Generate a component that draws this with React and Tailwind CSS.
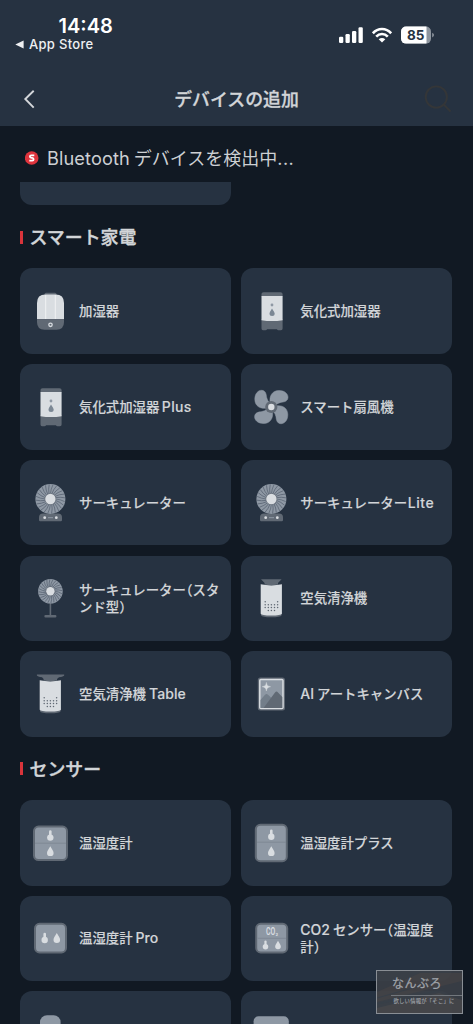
import React from "react";

const LIGHT = "#d9dde1";
const MID = "#8e98a4";
const DARK = "#606974";

function Icon({ children }) {
  return (
    <svg width="40" height="40" viewBox="0 0 40 40" fill="none" className="block shrink-0">
      {children}
    </svg>
  );
}

function Humidifier() {
  return (
    <Icon>
      <rect x="14.5" y="1.8" width="12" height="4" rx="1.5" fill={DARK} />
      <path d="M7 28.3V12Q7 3.6 15.5 3.6H25.5Q34 3.6 34 12V28.3Z" fill={LIGHT} />
      <path d="M15.7 4V28M25.3 4V28" stroke="#f0f2f3" strokeWidth="1" />
      <path d="M7 28.3H34V31Q34 38.7 26.5 38.7H14.5Q7 38.7 7 31Z" fill={DARK} />
      <circle cx="20.5" cy="33.8" r="1.7" stroke={LIGHT} strokeWidth="1.3" />
    </Icon>
  );
}

function Evaporative() {
  return (
    <Icon>
      <path d="M10.5 5.5V3Q10.5 1.2 12.5 1.2H29.5Q31.6 1.2 31.6 3V5.5Z" fill={DARK} />
      <path d="M10.5 28V37.5Q10.5 39.2 12 39.2H14.5Q15.8 39.2 16 38.3H26Q26.2 39.2 27.5 39.2H30Q31.6 39.2 31.6 37.5V28Z" fill={DARK} />
      <path d="M10.5 4.9H31.6V29.2Q21 31 10.5 29.2Z" fill={LIGHT} />
      <circle cx="21" cy="14" r="1.4" fill={MID} />
      <path d="M21 17.4C19.5 20 18.5 21.2 18.5 22.6A2.6 2.5 0 0 0 23.7 22.6C23.7 21.2 22.5 20 21 17.4Z" fill="#7b8794" />
    </Icon>
  );
}

function BladeFan() {
  return (
    <Icon>
      <g transform="translate(20.3 20)">
        {[0, 90, 180, 270].map((a) => (
          <path
            key={a}
            transform={`rotate(${a})`}
            d="M-1.1 -4C-2.4 -11 1 -16.4 7.5 -16.5C13.5 -16.6 16.9 -13 16.7 -9.5C16.4 -5.2 12 -5 9.5 -4.6Q6.5 -4 4.4 -2Z"
            fill={MID}
            stroke={MID}
            strokeWidth="0.5"
          />
        ))}
        <circle r="6.1" fill={DARK} />
        <circle r="3.2" fill={LIGHT} />
      </g>
    </Icon>
  );
}

function Rotor({ cx, cy, r, hub }) {
  const gaps = Array.from({ length: 24 }, (_, i) => i * 15);
  return (
    <g transform={`translate(${cx} ${cy})`}>
      <circle r={r} fill={MID} />
      {gaps.map((a) => (
        <path
          key={a}
          transform={`rotate(${a})`}
          d={`M0 ${-hub}Q0.4 ${-(hub + r) / 2} 2.6 ${-r + 0.7}`}
          stroke="#566170"
          strokeWidth="0.7"
        />
      ))}
      <circle r={hub + 0.5} fill={DARK} />
      <circle r={hub} fill={LIGHT} />
    </g>
  );
}

function Circulator() {
  return (
    <Icon>
      <path d="M9 37V34.5Q9 30.5 13 30.5H28Q32 30.5 32 34.5V37Q32 38.2 30.8 38.2H10.2Q9 38.2 9 37Z" fill={DARK} />
      <Rotor cx={20.4} cy={16} r={15} hub={5.2} />
      <circle cx="14.7" cy="34.7" r="1.4" fill={LIGHT} />
      <circle cx="26.3" cy="34.7" r="1.4" fill={LIGHT} />
      <path d="M18 34.7H23" stroke={MID} strokeWidth="1" />
    </Icon>
  );
}

function StandCirculator() {
  return (
    <Icon>
      <path d="M20.4 24V38" stroke={DARK} strokeWidth="1.6" />
      <rect x="14.4" y="37" width="12" height="2.6" rx="1" fill={DARK} />
      <Rotor cx={20.4} cy={13.2} r={12.3} hub={4.2} />
    </Icon>
  );
}

function PurifierBody() {
  const dots = [];
  const cols = [13.6, 16.7, 19.8, 22.9, 26];
  cols.forEach((x, c) => {
    [23.8, 26.7, 29.6, 32.5].forEach((y, r) => {
      const edge = c === 0 || c === 4;
      if (edge && r === 3) return;
      if (!edge && r === 0) return;
      dots.push(<circle key={`${x}-${y}`} cx={x + 0.6} cy={y} r="0.75" fill={DARK} />);
    });
  });
  return (
    <>
      <path d="M10 34H30.6V37.2Q29.5 39.2 20.3 39.2Q11 39.2 10 37.2Z" fill={DARK} />
      <path d="M9.7 6.3Q20.3 8.5 30.9 6.3V35.8Q30.2 37.6 20.3 37.6Q10.4 37.6 9.7 35.8Z" fill={LIGHT} />
      {dots}
    </>
  );
}

function Purifier() {
  return (
    <Icon>
      <path d="M10 1.3H30.6L27 5V6.6Q20.3 7.8 13.6 6.6V5Z" fill={DARK} />
      <PurifierBody />
    </Icon>
  );
}

function PurifierTable() {
  return (
    <Icon>
      <path d="M6.9 0.6H34.2V1.6Q33.5 2.8 29 3.3L27 5V6.6Q20.3 7.8 13.6 6.6V5L12 3.3Q7.5 2.8 6.9 1.6Z" fill={DARK} />
      <PurifierBody />
    </Icon>
  );
}

function ArtCanvas() {
  return (
    <Icon>
      <rect x="6.8" y="3.6" width="27.2" height="33" rx="2.5" fill={DARK} />
      <rect x="8.8" y="5.6" width="23.2" height="29" rx="1" fill={MID} stroke={LIGHT} strokeWidth="1.5" />
      <path d="M9.5 26L14 20.8Q15.5 19.4 17 20.8L20.5 24L13 33.9H9.5Z" fill="#737e8a" />
      <path d="M12.5 33.9L24 18.4Q25.5 16.6 27 18.4L31.3 23V33.9Z" fill={DARK} />
      <path d="M15.4 8.4C15.9 11.4 16.6 12 19.6 12.7C16.6 13.4 15.9 14 15.4 17C14.9 14 14.2 13.4 11.2 12.7C14.2 12 14.9 11.4 15.4 8.4Z" fill={LIGHT} stroke={LIGHT} strokeWidth="0.4" />
    </Icon>
  );
}

function Thermo({ x, y }) {
  return (
    <g transform={`translate(${x} ${y})`} fill={LIGHT}>
      <rect x="-1.3" y="-5.3" width="2.6" height="7" rx="1.3" />
      <circle cx="0" cy="2" r="3.2" />
    </g>
  );
}

function Drop({ x, y }) {
  return (
    <path
      transform={`translate(${x} ${y})`}
      d="M0 -5C-1.6 -2.2 -3.3 -0.2 -3.3 1.7A3.3 3.2 0 0 0 3.3 1.7C3.3 -0.2 1.6 -2.2 0 -5Z"
      fill={LIGHT}
    />
  );
}

function Panel({ x, y, w, h }) {
  return <rect x={x + 1} y={y + 1} width={w - 2} height={h - 2} rx="4.5" fill={MID} stroke={DARK} strokeWidth="2" />;
}

function Meter() {
  return (
    <Icon>
      <Panel x={3} y={2.6} w={35} h={35.4} />
      <path d="M5 20.2H36" stroke="#7b8591" strokeWidth="0.8" />
      <Thermo x={20.3} y={12.6} />
      <Drop x={20.3} y={28.2} />
    </Icon>
  );
}

function MeterPlus() {
  return (
    <Icon>
      <Panel x={3.8} y={0.8} w={33} h={38.4} />
      <path d="M6 19.2H35" stroke="#7b8591" strokeWidth="0.8" />
      <Thermo x={20.3} y={11.8} />
      <Drop x={20.3} y={28.2} />
    </Icon>
  );
}

function MeterPro() {
  return (
    <Icon>
      <Panel x={4} y={4.8} w={33} h={30.6} />
      <Thermo x={14.7} y={20} />
      <Drop x={26.8} y={20} />
    </Icon>
  );
}

function MeterCO2() {
  return (
    <Icon>
      <Panel x={4.2} y={4.8} w={33} h={30.6} />
      <path d="M6.5 20.3H35" stroke="#7b8591" strokeWidth="0.8" />
      <text transform="translate(15 17.4) scale(0.66 1)" fontSize="10.4" fontWeight="600" fontFamily="Roboto, sans-serif" fill={LIGHT}>
        CO
      </text>
      <text x="24.6" y="17.6" fontSize="4.4" fontWeight="700" fontFamily="Roboto, sans-serif" fill={LIGHT}>
        2
      </text>
      <g transform="translate(14.5 27) scale(0.86)">
        <Thermo x={0} y={0} />
      </g>
      <g transform="translate(27 27) scale(0.86)">
        <Drop x={0} y={0} />
      </g>
    </Icon>
  );
}

function RoundSensor() {
  return (
    <Icon>
      <rect x="10" y="1.2" width="20.6" height="38" rx="7" fill={MID} />
    </Icon>
  );
}

function WideSensor() {
  return (
    <Icon>
      <rect x="2.6" y="2.3" width="35.2" height="36" rx="5" fill={MID} />
    </Icon>
  );
}

function Latin({ children, className = "" }) {
  return <span className={`font-['Inter'] ${className}`}>{children}</span>;
}

function Half({ children }) {
  return <span className="[font-feature-settings:'halt']">{children}</span>;
}

const appliances = [
  { icon: Humidifier, label: "加湿器" },
  { icon: Evaporative, label: "気化式加湿器" },
  { icon: Evaporative, label: <>気化式加湿器<Latin className="ml-[2.5px] text-[14px] tracking-[0.3px]">Plus</Latin></> },
  { icon: BladeFan, label: "スマート扇風機" },
  { icon: Circulator, label: "サーキュレーター" },
  { icon: Circulator, label: <>サーキュレーター<Latin className="ml-[0.5px] text-[14px] tracking-[0.6px]">Lite</Latin></> },
  { icon: StandCirculator, label: <>サーキュレーター<Half>（</Half>スタ<br />ンド型<Half>）</Half></> },
  { icon: Purifier, label: "空気清浄機" },
  { icon: PurifierTable, label: <>空気清浄機<Latin className="ml-[3px] text-[14px] tracking-[0.1px]">Table</Latin></> },
  { icon: ArtCanvas, label: <><Latin className="mr-[3px] text-[14px]">AI</Latin>アートキャンバス</> },
];

const sensors = [
  { icon: Meter, label: "温湿度計" },
  { icon: MeterPlus, label: "温湿度計プラス" },
  { icon: MeterPro, label: <>温湿度計<Latin className="ml-[3px] text-[14px]">Pro</Latin></> },
  { icon: MeterCO2, label: <><Latin className="mr-[3px] text-[14px]">CO2</Latin>センサー<Half>（</Half>温湿度<br />計<Half>）</Half></> },
  { icon: RoundSensor, label: "" },
  { icon: WideSensor, label: "" },
];

function DeviceCard({ icon: Glyph, label }) {
  return (
    <div className="flex h-[85.6px] items-center gap-[9px] rounded-xl bg-[#263241] pl-[10px]">
      <Glyph />
      <span className="pb-[1px] text-[13.4px] leading-[17px] font-medium whitespace-nowrap text-[#d2d5d8] [-webkit-text-stroke:0.15px_#d2d5d8]">{label}</span>
    </div>
  );
}

function Section({ title, items }) {
  return (
    <section>
      <h2 className="flex h-[22px] items-center gap-[7px] text-[17.9px] font-medium text-[#d2d5d8] [-webkit-text-stroke:0.4px_#d2d5d8]">
        <span className="h-[13px] w-[2.5px] bg-[#d9343b]" />
        <span className="pb-[2px] leading-[22px]">{title}</span>
      </h2>
      <div className="mt-[20.3px] grid grid-cols-2 gap-x-[10.6px] gap-y-[10.2px]">
        {items.map((d, i) => (
          <DeviceCard key={i} {...d} />
        ))}
      </div>
    </section>
  );
}

function StatusBar() {
  return (
    <div className="flex h-[70px] justify-between">
      <div className="pt-[15px] pl-[15px] font-['Inter'] text-white">
        <div className="pl-[43.5px] text-[20px] leading-[23px] font-semibold">14:48</div>
        <div className="flex items-center gap-[5px] text-[13px] leading-[13px] font-medium tracking-[0.3px] text-[#eef0f2]">
          <svg width="9" height="9" viewBox="0 0 9 9" fill="currentColor">
            <path d="M0.3 4.5L8.6 0.4V8.6Z" />
          </svg>
          App Store
        </div>
      </div>
      <div className="flex h-[18px] gap-[9px] pt-[26px] pr-[39px]">
        <svg width="24" height="18" viewBox="0 0 24 18" fill="#fff">
          <rect x="0" y="10.7" width="4.3" height="6.3" rx="1.2" />
          <rect x="6.5" y="8" width="4.3" height="9" rx="1.2" />
          <rect x="13" y="5" width="4.3" height="12" rx="1.2" />
          <rect x="19.5" y="1.3" width="4.3" height="15.7" rx="1.2" />
        </svg>
        <svg width="20" height="18" viewBox="0 0 20 18" fill="none" stroke="#fff" strokeWidth="2.6">
          <path d="M0.8 7.3C5.8 1.5 14.2 1.5 19.2 7.3" />
          <path d="M4.2 10.6C7.5 7.1 12.5 7.1 15.8 10.6" />
          <path d="M10 16.6L6.7 13.2C8.7 11.5 11.3 11.5 13.3 13.2Z" fill="#fff" stroke="none" />
        </svg>
        <svg width="33" height="18" viewBox="0 0 33 18">
          <defs>
            <clipPath id="battery">
              <rect x="0" y="0.6" width="30" height="17" rx="5" />
            </clipPath>
          </defs>
          <g clipPath="url(#battery)">
            <rect width="30" height="18" fill="#8d959e" />
            <rect width="25.5" height="18" fill="#fff" />
          </g>
          <path d="M31.2 6.7Q33 7.6 33 9.1T31.2 11.5Z" fill="#8d959e" />
          <text x="14.8" y="14" textAnchor="middle" fontFamily="Inter, sans-serif" fontSize="13.5" fontWeight="700" fill="#263241">
            85
          </text>
        </svg>
      </div>
    </div>
  );
}

export default function App() {
  return (
    <div className="relative flex h-[1024px] w-[473px] flex-col overflow-hidden bg-[#111923] font-['Noto_Sans_CJK_JP',sans-serif]">
      <header className="h-[126px] shrink-0 bg-[#263241]">
        <StatusBar />
        <div className="flex h-[56px] items-center justify-between pr-[21px] pl-[23px]">
          <svg width="28" height="20" viewBox="0 0 28 20" fill="none" stroke="#d4d7da" strokeWidth="1.9" className="mt-[1px]">
            <path d="M10.7 1.7L2.3 10L10.7 18.6" />
          </svg>
          <h1 className="pr-[2px] pb-[1px] text-[17.9px] leading-[24px] font-medium text-[#d2d5d8] [-webkit-text-stroke:0.3px_#d2d5d8]">デバイスの追加</h1>
          <svg width="28" height="28" viewBox="0 0 28 28" fill="none" stroke="#343638" strokeWidth="1.9" className="mt-[1px]">
            <circle cx="12.3" cy="12" r="10.6" />
            <path d="M19.8 19.5L26.5 26.5" />
          </svg>
        </div>
      </header>

      <div className="flex h-[56px] shrink-0 items-center gap-[8px] pt-[7px] pl-[25px] text-[18px] text-[#cdd0d3]">
        <svg width="14" height="14" viewBox="0 0 14 14" fill="none">
          <circle cx="6.7" cy="7" r="6.8" fill="#df343d" />
          <path d="M9.3 4.4H6.2Q4.9 4.4 4.9 5.5T6.3 6.8H7.3Q8.6 6.9 8.6 8.2T7.2 9.6H4.3" stroke="#fff" strokeWidth="1.8" />
        </svg>
        <p className="leading-[24px] whitespace-nowrap">
          <Latin className="mr-[4px] text-[18.2px] tracking-[0.1px]">Bluetooth</Latin>デバイスを検出中<Latin className="tracking-[0.4px]">...</Latin>
        </p>
      </div>

      <main className="min-h-0 flex-1 overflow-hidden pr-[21px] pl-[20px]">
        <div className="h-[23px] w-[210.7px] rounded-b-xl bg-[#263241]" />
        <div className="mt-[21px]">
          <Section title="スマート家電" items={appliances} />
        </div>
        <div className="mt-[20.6px]">
          <Section title="センサー" items={sensors} />
        </div>
      </main>

      <aside className="absolute top-[970px] left-[376px] flex h-[44px] w-[87px] flex-col overflow-hidden border-[1.5px] border-[#898e94] bg-[#3c4048]/90 text-[#a0a4aa]">
        <svg width="85" height="42" viewBox="0 0 85 42" className="absolute inset-0 opacity-40">
          <path d="M0 21L43 2H85V10L0 31Z" fill="#4e4745" />
          <path d="M0 37L62 22L85 29V42H0Z" fill="#55504e" />
          <path d="M0 27L60 10M0 33L68 18" stroke="#35404c" strokeWidth="1.2" />
        </svg>
        <div className="relative pl-[15px] text-[12px] leading-[24px] tracking-[0.5px] [-webkit-text-stroke:0.25px_#a0a4aa]">なんぶろ</div>
        <div className="relative ml-[14px] h-px bg-[#72777d]" />
        <div className="relative pl-[16.5px] text-[5.3px] leading-[10px] tracking-[0.25px] whitespace-nowrap [-webkit-text-stroke:0.1px_#a0a4aa]">欲しい情報が「そこ」に</div>
      </aside>
    </div>
  );
}
